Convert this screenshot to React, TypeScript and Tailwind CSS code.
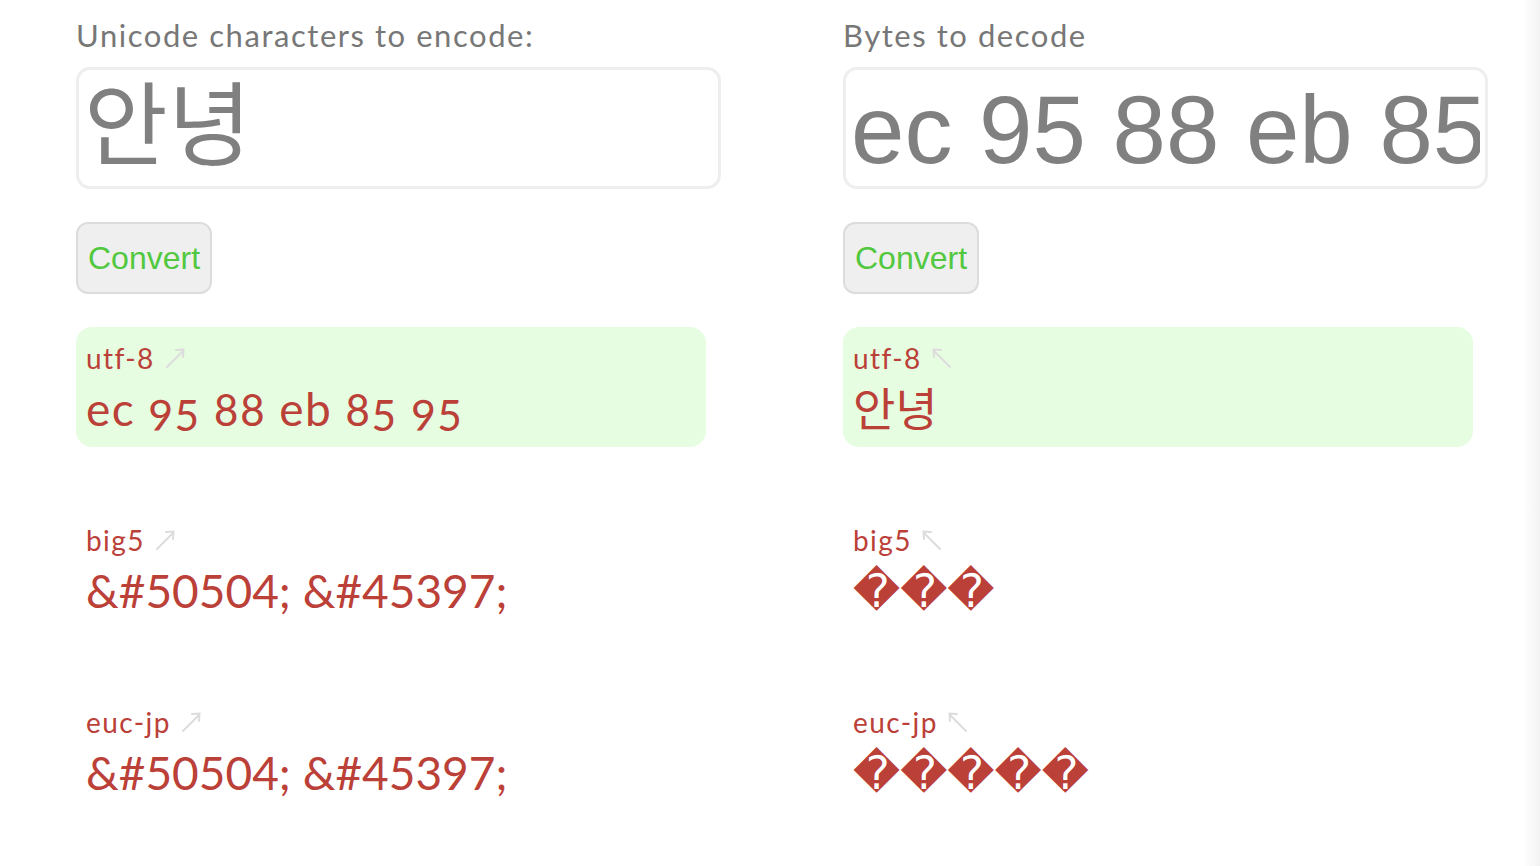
import React from 'react'

type Result = {
  encoding: string
  value: string
  highlight?: boolean
  replacement?: boolean
  oldstyle?: boolean
}

function Arrow({ direction }: { direction: 'ne' | 'nw' }) {
  return (
    <svg
      className={direction === 'nw' ? '-scale-x-100' : ''}
      width="22"
      height="22"
      viewBox="0 0 22 22"
      fill="none"
      stroke="#dcdcdc"
      strokeWidth="2"
      strokeLinecap="round"
    >
      <path d="M3 20 L19 4" />
      <path d="M12 3 L19.5 2.5 L19 10" />
    </svg>
  )
}

function Column({
  label,
  input,
  inputClass,
  results,
  arrow,
}: {
  label: string
  input: string
  inputClass: string
  results: Result[]
  arrow: 'ne' | 'nw'
}) {
  return (
    <section className="flex flex-col pl-[76px] pt-[16px]">
      <label className="text-[31px] leading-[38px] tracking-[0.05em] text-[#777777]">{label}</label>
      <input
        className={[
          "mt-[13px] h-[122px] w-[645px] rounded-[14px] border-[3px] border-[#eeeeee] bg-white px-[5px] font-['Liberation_Sans','Noto_Sans_CJK_KR',sans-serif] text-[#808080] outline-none",
          inputClass,
        ].join(' ')}
        defaultValue={input}
        type="text"
      />
      <button
        className="mt-[33px] h-[72px] w-[136px] rounded-[12px] border-2 border-[#dcdcdc] bg-[#efefef] font-['Liberation_Sans',sans-serif] text-[32px] text-[#52c83f]"
        type="button"
      >
        Convert
      </button>

      <div className="mt-[33px] flex flex-col gap-[62px]">
        {results.map((result) => (
          <div
            className={[
              'h-[120px] w-[630px] rounded-[16px] px-[10px] pt-[14px]',
              result.highlight ? 'bg-[#e6fde1]' : '',
            ].join(' ')}
            key={result.encoding}
          >
            <div className="flex items-center gap-[9px] text-[28px] leading-[34px] text-[#bb4038]">
              <span className="tracking-[0.05em]">{result.encoding}</span>
              <Arrow direction={arrow} />
            </div>
            <div
              className={[
                'mt-[2px] whitespace-nowrap text-[46px] leading-[64px] text-[#bb4038]',
                result.replacement ? "font-['DejaVu_Sans',sans-serif] text-[45px]" : '',
                result.oldstyle ? 'oldstyle-nums tracking-[0.03em]' : '',
              ].join(' ')}
            >
              {result.value}
            </div>
          </div>
        ))}
      </div>
    </section>
  )
}

export default function App() {
  const encodeResults: Result[] = [
    { encoding: 'utf-8', value: 'ec 95 88 eb 85 95', highlight: true, oldstyle: true },
    { encoding: 'big5', value: '&#50504; &#45397;' },
    { encoding: 'euc-jp', value: '&#50504; &#45397;' },
  ]

  const decodeResults: Result[] = [
    { encoding: 'utf-8', value: '안녕', highlight: true },
    { encoding: 'big5', value: '\uFFFD\uFFFD\uFFFD', replacement: true },
    { encoding: 'euc-jp', value: '\uFFFD\uFFFD\uFFFD\uFFFD\uFFFD', replacement: true },
  ]

  return (
    <div className="relative grid min-h-screen grid-cols-[767px_767px] overflow-hidden bg-white font-['Lato','Noto_Sans_CJK_KR',sans-serif]">
      <Column
        arrow="ne"
        input="안녕"
        inputClass="text-[91px] pb-[2px]"
        label="Unicode characters to encode:"
        results={encodeResults}
      />
      <Column
        arrow="nw"
        input="ec 95 88 eb 85 95"
        inputClass="text-[96px] pt-[4px]"
        label="Bytes to decode"
        results={decodeResults}
      />
      <div className="pointer-events-none fixed right-0 top-0 h-full w-[16px] bg-linear-to-r from-transparent to-[#f2f2f2]" />
    </div>
  )
}
